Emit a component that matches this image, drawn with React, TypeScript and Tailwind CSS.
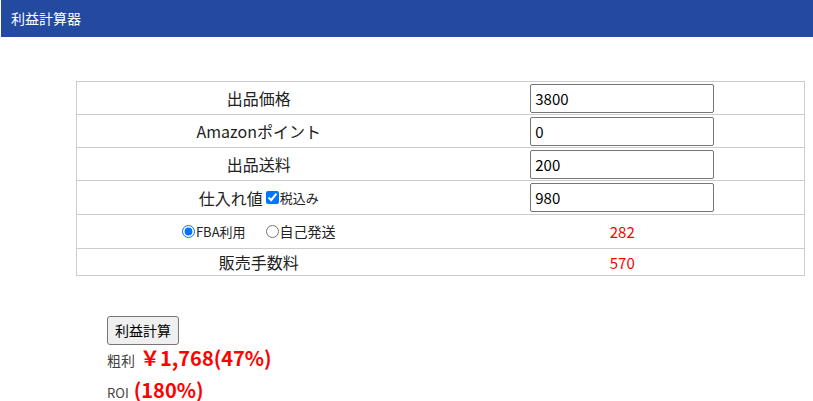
import { useState } from 'react'

const font = { fontFamily: '"Noto Sans CJK JP", "Noto Sans", sans-serif' }

// labels (escaped to keep the file plain ascii)
const T = {
  title: '\u5229\u76ca\u8a08\u7b97\u5668',
  price: '\u51fa\u54c1\u4fa1\u683c',
  point: 'Amazon\u30dd\u30a4\u30f3\u30c8',
  ship: '\u51fa\u54c1\u9001\u6599',
  cost: '\u4ed5\u5165\u308c\u5024',
  tax: '\u7a0e\u8fbc\u307f',
  fba: 'FBA\u5229\u7528',
  self: '\u81ea\u5df1\u767a\u9001',
  fee: '\u8ca9\u58f2\u624b\u6570\u6599',
  calc: '\u5229\u76ca\u8a08\u7b97',
  gross: '\u7c97\u5229',
  yen: '\uffe5',
}

function NumInput({ value }: { value: string }) {
  return (
    <input
      defaultValue={value}
      className="w-[184px] h-[29px] border border-[#767676] rounded-[2px] px-[4px] text-[15px] text-black bg-white outline-none"
    />
  )
}

export default function App() {
  const [mode, setMode] = useState('fba')
  const rows = [
    { label: T.price, value: '3800' },
    { label: T.point, value: '0' },
    { label: T.ship, value: '200' },
  ]

  return (
    <div className="w-[813px] h-[401px] bg-white overflow-hidden text-[#222]" style={font}>
      <header className="h-[37px] ml-[1px] bg-[#234a9f] flex items-center px-[10px]">
        <span className="text-white text-[14px]">{T.title}</span>
      </header>

      <table className="mt-[44px] ml-[76px] w-[729px] border-collapse border border-[#cccccc] table-fixed">
        <tbody>
          {rows.map((r) => (
            <tr key={r.value} className="h-[33px] border-b border-[#cccccc]">
              <td className="w-[364px] text-center text-[16px] leading-none">{r.label}</td>
              <td className="text-center leading-none align-middle">
                <NumInput value={r.value} />
              </td>
            </tr>
          ))}
          <tr className="h-[34px] border-b border-[#cccccc]">
            <td className="text-center text-[16px] leading-none">
              <span className="inline-flex items-center">
                {T.cost}
                <input type="checkbox" defaultChecked className="ml-[3px] w-[13px] h-[13px] accent-[#0075ff]" />
                <span className="text-[13px] ml-[1px]">{T.tax}</span>
              </span>
            </td>
            <td className="text-center leading-none">
              <NumInput value="980" />
            </td>
          </tr>
          <tr className="h-[34px] border-b border-[#cccccc]">
            <td className="text-center text-[13px] leading-none">
              <span className="inline-flex items-center gap-[20px]">
                <label className="inline-flex items-center">
                  <input
                    type="radio"
                    name="ship"
                    checked={mode === 'fba'}
                    onChange={() => setMode('fba')}
                    className="m-0 mr-[1px] w-[13px] h-[13px] accent-[#0075ff]"
                  />
                  {T.fba}
                </label>
                <label className="inline-flex items-center text-[14px]">
                  <input
                    type="radio"
                    name="ship"
                    checked={mode === 'self'}
                    onChange={() => setMode('self')}
                    className="m-0 mr-[1px] w-[13px] h-[13px] accent-[#0075ff]"
                  />
                  {T.self}
                </label>
              </span>
            </td>
            <td className="text-center text-[15px] text-[#ff0000] leading-none">282</td>
          </tr>
          <tr className="h-[27px]">
            <td className="text-center text-[16px] leading-none">{T.fee}</td>
            <td className="text-center text-[15px] text-[#ff0000] leading-none">570</td>
          </tr>
        </tbody>
      </table>

      <div className="ml-[107px] mt-[40px]">
        <button className="h-[29px] px-[7px] text-[14px] text-black bg-[#efefef] border border-[#767676] rounded-[3px]">
          {T.calc}
        </button>
        <div className="flex items-baseline leading-[25px] text-[#444]">
          <span className="text-[14px]">{T.gross}</span>
          <span className="ml-[5px] text-[20px] font-bold text-[#ff0000]">{T.yen + '1,768(47%)'}</span>
        </div>
        <div className="flex items-baseline mt-[5px] leading-[24px] text-[#444]">
          <span className="text-[13px]">ROI</span>
          <span className="ml-[5px] text-[20px] font-bold text-[#ff0000]">(180%)</span>
        </div>
      </div>
    </div>
  )
}
